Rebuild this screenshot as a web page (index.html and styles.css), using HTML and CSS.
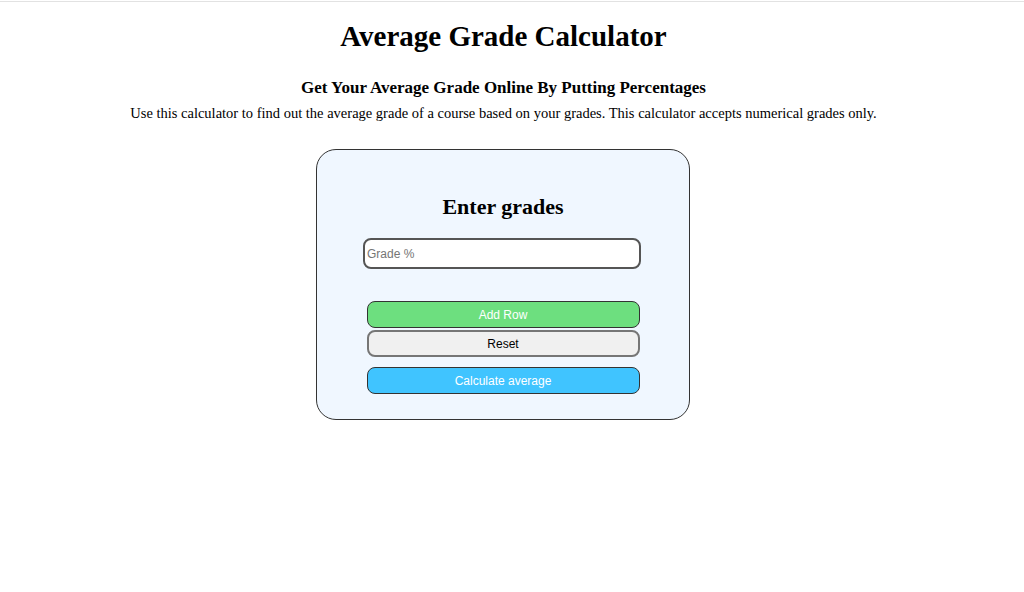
FILE: index.html
```html
<!DOCTYPE html>
<html>
<head>
<meta charset="utf-8">
<link rel="stylesheet" href="styles.css">
</head>
<body>
<div class="topline"></div>
<main class="page">
  <h1 class="title">Average Grade Calculator</h1>
  <h3 class="subtitle">Get Your Average Grade Online By Putting Percentages</h3>
  <p class="intro">Use this calculator to find out the average grade of a course based on your grades. This calculator accepts numerical grades only.</p>
  <section class="card">
    <h2 class="card-title">Enter grades</h2>
    <input class="grade-input" type="text" placeholder="Grade %">
    <div class="actions">
      <button class="btn btn-add">Add Row</button>
      <button class="btn btn-reset">Reset</button>
      <button class="btn btn-calc">Calculate average</button>
    </div>
  </section>
</main>
</body>
</html>
```

FILE: styles.css
```css
html, body {
  margin: 0;
  padding: 0;
  background: #fff;
}
body {
  font-family: "Liberation Serif", "Times New Roman", serif;
  color: #000;
}
.topline {
  height: 1px;
  margin-top: 1px;
  background: #e2e2e2;
}
.page {
  width: 1007px;
  display: flex;
  flex-direction: column;
  align-items: center;
}
.title {
  font-size: 29px;
  font-weight: bold;
  margin: 18px 0 0;
  line-height: 32px;
}
.subtitle {
  font-size: 17px;
  font-weight: bold;
  margin: 26px 0 0;
  line-height: 20px;
}
.intro {
  font-size: 14.5px;
  margin: 6px 0 0;
  line-height: 18px;
}
.card {
  box-sizing: border-box;
  width: 374px;
  height: 271px;
  margin-top: 27px;
  margin-right: 1px;
  border: 1px solid #333;
  border-radius: 20px;
  background: #f0f7ff;
  display: flex;
  flex-direction: column;
  align-items: center;
  padding-top: 44px;
}
.card-title {
  font-size: 22px;
  font-weight: bold;
  margin: 0;
  line-height: 26px;
}
.grade-input {
  box-sizing: border-box;
  width: 278px;
  height: 31px;
  margin-top: 18px;
  margin-right: 2px;
  border: 2px solid #555;
  border-radius: 8px;
  background: #fff;
  padding: 0 2px;
  font-family: "Liberation Sans", Arial, sans-serif;
  font-size: 12px;
  outline: none;
}
.grade-input::placeholder {
  color: #757575;
}
.actions {
  display: flex;
  flex-direction: column;
  align-items: center;
  margin-top: 32px;
}
.btn {
  box-sizing: border-box;
  width: 273px;
  height: 27px;
  border-radius: 8px;
  font-family: "Liberation Sans", Arial, sans-serif;
  font-size: 12px;
  padding: 0;
  cursor: pointer;
}
.btn-add {
  background: #6ddf7f;
  color: #fff;
  border: 1px solid #333;
}
.btn-reset {
  background: #f0f0f0;
  color: #000;
  border: 2px solid #767676;
  margin-top: 2px;
}
.btn-calc {
  background: #40c4ff;
  color: #fff;
  border: 1px solid #333;
  margin-top: 10px;
}
```
